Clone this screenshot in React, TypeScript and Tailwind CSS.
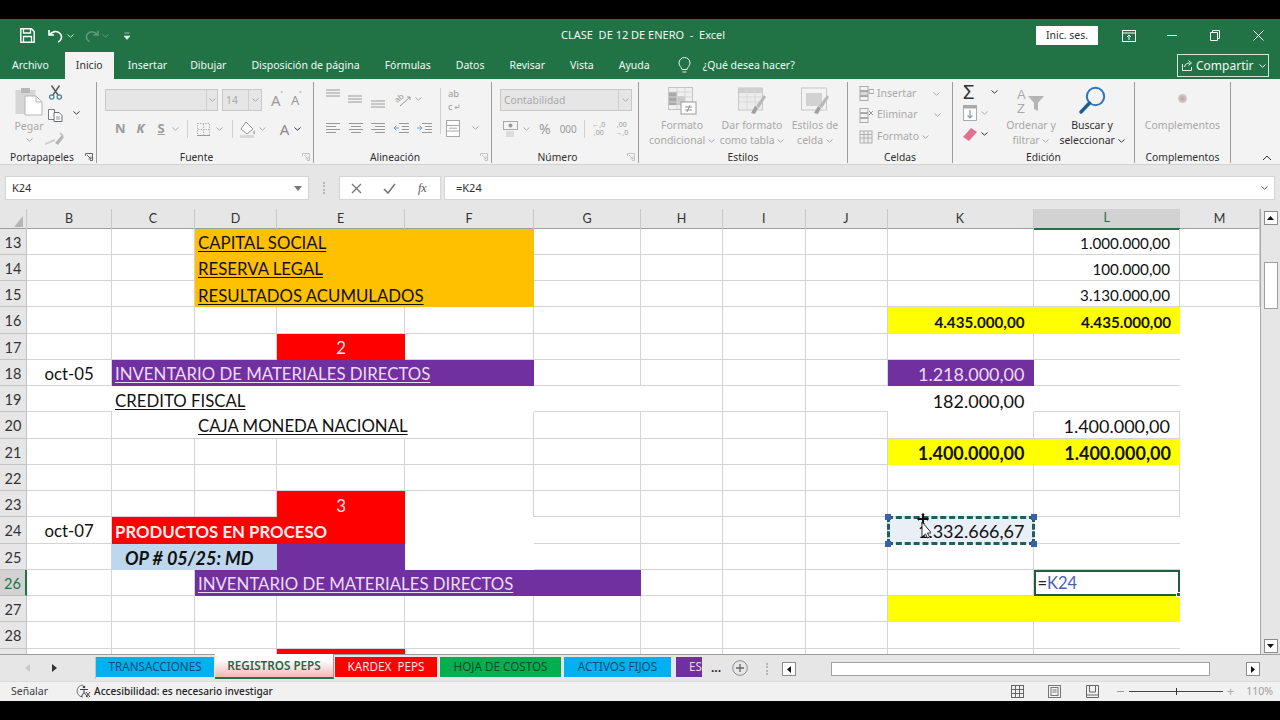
import React from "react";

const UI = "[font-family:'Noto_Sans',sans-serif]";
const SHEET = "[font-family:'Lato',sans-serif]";
const G = "#a8a8a8";

type S = { w?: number; h?: number; c?: string; className?: string };

const Chev = ({ c = G, className = "" }: S) => (
  <svg width="7" height="4" viewBox="0 0 7 4" className={`shrink-0 ${className}`}>
    <path d="M0.5 0.5 L3.5 3.2 L6.5 0.5" fill="none" stroke={c} strokeWidth="1" />
  </svg>
);

const Launcher = ({ c = "#b0b0b0" }: S) => (
  <svg width="8" height="8" viewBox="0 0 8 8">
    <path d="M0.5 3V0.5H7.5V7.5H5M2 2L6 6M6 3.5V6H3.5" fill="none" stroke={c} strokeWidth="0.9" />
  </svg>
);

const Lines = ({ kind, w = 14 }: { kind: "l" | "c" | "r" | "h"; w?: number }) => {
  const rows = kind === "h" ? [2, 5, 8] : [1.5, 4.5, 7.5, 10.5];
  return (
    <svg width={w} height="12" viewBox="0 0 14 12" className="shrink-0">
      {rows.map((y, i) => {
        const short = i % 2 === 1;
        const x1 = kind === "r" && short ? 4 : kind === "c" && short ? 2 : 0;
        const x2 = kind === "l" && short ? 10 : kind === "c" && short ? 12 : 14;
        return <line key={y} x1={x1} x2={x2} y1={y} y2={y} stroke="#9a9a9a" strokeWidth="1" />;
      })}
    </svg>
  );
};

const Group = ({ w, label, launcher, children, labelCls = "text-center" }: { w: number; label: string; launcher?: string; children: React.ReactNode; labelCls?: string }) => (
  <div style={{ width: w }} className="flex flex-col h-[81px] mt-[3px] border-r border-[#9c9c9c] shrink-0">
    <div className="h-[69px] flex">{children}</div>
    <div className={`relative h-[12px] text-[10.3px] leading-[12px] text-[#303030] whitespace-nowrap ${labelCls}`}>
      {label}
      {launcher && (
        <span className="absolute right-[3px] top-[2px] flex">
          <Launcher c={launcher} />
        </span>
      )}
    </div>
  </div>
);

const GreyBox = ({ w, text, arrow }: { w: number; text?: string; arrow: number }) => (
  <div style={{ width: w }} className="h-[22px] flex bg-[#e6e6e6] border border-[#c8c8c8]">
    <div className="flex-1 text-[10.3px] leading-[20px] pl-[3px] text-[#a9a9a9]">{text}</div>
    <div style={{ width: arrow }} className="border-l border-[#cfcfcf] flex items-center justify-center">
      <Chev />
    </div>
  </div>
);

const Clipboard = () => (
  <svg width="28" height="29" viewBox="0 0 28 29" className="shrink-0">
    <rect x="0.5" y="3" width="20" height="24" fill="#d6d6d6" />
    <rect x="6" y="1" width="9" height="5" fill="#b8b8b8" />
    <path d="M10 9h11l6 6v13H10z" fill="#fff" stroke="#b5b5b5" />
    <path d="M21 9v6h6" fill="none" stroke="#b5b5b5" />
  </svg>
);

const Scissors = () => (
  <svg width="15" height="15" viewBox="0 0 15 15" className="shrink-0">
    <path d="M3.5 0.5 L10 10 M11.5 0.5 L5 10" stroke="#555" strokeWidth="1.4" fill="none" />
    <circle cx="3.7" cy="12" r="2.2" fill="none" stroke="#3f7fa5" strokeWidth="1.2" />
    <circle cx="11.3" cy="12" r="2.2" fill="none" stroke="#3f7fa5" strokeWidth="1.2" />
  </svg>
);

const CopyI = () => (
  <svg width="15" height="13" viewBox="0 0 15 13" className="shrink-0">
    <path d="M0.5 0.5h6v10h-6z" fill="#fff" stroke="#7a7a7a" />
    <path d="M6 3.5h5l3 3v6H6z" fill="#fff" stroke="#6a6a6a" />
    <path d="M8 8h4M8 10h4" stroke="#7a9ab5" />
  </svg>
);

const Brush = () => (
  <svg width="20" height="15" viewBox="0 0 20 15" className="shrink-0">
    <path d="M0 13 L10 9" stroke="#d0d0d0" strokeWidth="2" />
    <path d="M10 12 L17 4 L19 6 L13 14z" fill="#b5b5b5" />
    <path d="M15 2l3 3" stroke="#c5c5c5" strokeWidth="2" />
  </svg>
);

const FormatCond = () => (
  <svg width="29" height="28" viewBox="0 0 29 28" className="shrink-0">
    <rect x="0.5" y="0.5" width="24" height="22" fill="#f0f0f0" stroke="#c4c4c4" />
    <rect x="1" y="5" width="8" height="13" fill="#a8a8a8" />
    <rect x="9" y="9" width="8" height="9" fill="#c8c8c8" />
    <path d="M9 1v21M17 1v21M1 5h24M1 10h24M1 15h24" stroke="#d5d5d5" />
    <rect x="13" y="15" width="15" height="12" fill="#fff" stroke="#9a9a9a" />
    <path d="M17 20h7M17 23h7M22 18l-3 7" fill="none" stroke="#777" strokeWidth="0.8" />
  </svg>
);

const FormatTable = () => (
  <svg width="29" height="28" viewBox="0 0 29 28" className="shrink-0">
    <rect x="0.5" y="1" width="24" height="22" fill="#ececec" stroke="#c8c8c8" />
    <rect x="1" y="1" width="24" height="5" fill="#cfcfcf" />
    <path d="M9 1v22M17 1v22M1 10h24M1 15h24" stroke="#d8d8d8" />
    <path d="M13 26 L17 19 L20 21 L17 27z" fill="#a0a0a0" />
    <path d="M18 19 L26 8 L28 10 L21 21z" fill="#b8b8b8" />
  </svg>
);

const FormatCell = () => (
  <svg width="29" height="28" viewBox="0 0 29 28" className="shrink-0">
    <rect x="0.5" y="1" width="25" height="22" fill="#f3f3f3" stroke="#c8c8c8" />
    <rect x="5" y="6" width="16" height="13" fill="#d2d2d2" />
    <path d="M13 26 L17 19 L20 21 L17 27z" fill="#a0a0a0" />
    <path d="M18 19 L26 8 L28 10 L21 21z" fill="#b8b8b8" />
  </svg>
);

const CellIcon = ({ mark }: { mark: "i" | "x" | "f" }) => (
  <svg width="15" height="15" viewBox="0 0 15 15" className="shrink-0">
    {mark === "f" ? (
      <>
        <rect x="1" y="2" width="12" height="12" fill="#eee" stroke="#b0b0b0" />
        <path d="M1 5.5h12M1 9h12M5 2v12M9 2v12" stroke="#b0b0b0" />
      </>
    ) : (
      <>
        <rect x="1" y="0.5" width="8" height="4" fill="none" stroke="#aaa" />
        <rect x="1" y="5.5" width="8" height="4" fill={mark === "i" ? "#d8d8d8" : "none"} stroke="#aaa" />
        <rect x="1" y="10.5" width="8" height="4" fill="none" stroke="#aaa" />
        {mark === "i" ? <path d="M10 3.5h5v4h-5z" fill="none" stroke="#aaa" /> : <path d="M10 3l4 4M14 3l-4 4" stroke="#999" />}
      </>
    )}
  </svg>
);

const SortI = () => (
  <svg width="28" height="30" viewBox="0 0 28 30" className="shrink-0">
    <text x="0" y="12" fontSize="13" fill="#a9a9a9" fontFamily="Liberation Sans">A</text>
    <text x="0" y="26" fontSize="13" fill="#a9a9a9" fontFamily="Liberation Sans">Z</text>
    <path d="M11 9h16l-6 7v8l-4-2v-6z" fill="#b4b4b4" />
  </svg>
);

const SearchI = () => (
  <svg width="27" height="28" viewBox="0 0 27 28" className="shrink-0">
    <circle cx="16.5" cy="10.5" r="8.7" fill="none" stroke="#2e75b6" strokeWidth="2" />
    <path d="M10.5 17 L2 26" stroke="#1f5f99" strokeWidth="3.4" strokeLinecap="round" />
  </svg>
);

const Ribbon = () => (
  <div className={`flex h-[86px] bg-[#f3f3f3] border-b border-[#d2d2d2] ${UI}`}>
    <Group w={97} label="Portapapeles" launcher="#555" labelCls="text-left pl-[10px]">
      <div className="w-[28px] ml-[15px] flex flex-col items-center pt-[5px]">
        <Clipboard />
        <div className="text-[10.5px] leading-[14px] mt-[3px] text-[#a8a8a8]">Pegar</div>
        <Chev className="mt-[5px]" />
      </div>
      <div className="w-[20px] ml-[2px] flex flex-col items-center pt-[3px]">
        <Scissors />
        <div className="mt-[9px]"><CopyI /></div>
        <div className="mt-[9px]"><Brush /></div>
      </div>
      <Chev c="#333" className="ml-[8px] mt-[29px]" />
    </Group>

    <Group w={217} label="Fuente" launcher="#c0c0c0" labelCls="text-center pr-[17px]">
      <div className="flex flex-col">
        <div className="flex items-center mt-[7px] ml-[8px]">
          <GreyBox w={113} arrow={11} />
          <div className="ml-[4px]"><GreyBox w={40} text="14" arrow={13} /></div>
          <span className="ml-[9px] text-[15px] leading-[22px] text-[#9a9a9a]">A</span>
          <span className="text-[8px] leading-[8px] text-[#777] mb-[10px]">˄</span>
          <span className="ml-[8px] text-[13px] leading-[22px] text-[#9a9a9a]">A</span>
          <span className="text-[8px] leading-[8px] text-[#777] mb-[10px]">˅</span>
        </div>
        <div className="flex items-center h-[20px] mt-[8px] ml-[18px] text-[#9a9a9a] text-[13px]">
          <span className="font-bold">N</span>
          <span className="ml-[11px] font-bold italic">K</span>
          <span className="ml-[13px] font-bold underline">S</span>
          <Chev className="ml-[7px]" />
          <div className="ml-[8px] w-px h-[18px] bg-[#d0d0d0]" />
          <svg width="13" height="13" viewBox="0 0 13 13" className="ml-[9px]">
            <rect x="0.5" y="0.5" width="12" height="12" fill="none" stroke="#b5b5b5" strokeDasharray="1.5 1" />
            <path d="M6.5 1v11M1 6.5h11" stroke="#b5b5b5" strokeDasharray="1.5 1" />
            <path d="M0 12.5h13" stroke="#9a9a9a" />
          </svg>
          <Chev className="ml-[6px]" />
          <div className="ml-[9px] w-px h-[18px] bg-[#d0d0d0]" />
          <svg width="16" height="17" viewBox="0 0 16 17" className="ml-[7px]">
            <path d="M6 1 L13 8 L7 13 L1 8z" fill="#fff" stroke="#999" />
            <path d="M14 9c1 2 1.500 3 0.500 4s-2-1-0.500-4z" fill="#aaa" />
            <rect x="0" y="14" width="14" height="3" fill="#d8d8d8" />
          </svg>
          <Chev className="ml-[3px]" />
          <span className="ml-[14px] text-[15px] text-[#8c8c8c]">A</span>
          <Chev c="#333" className="ml-[5px]" />
        </div>
      </div>
    </Group>

    <Group w={178} label="Alineación" launcher="#c0c0c0" labelCls="text-center pr-[15px]">
      <div className="flex flex-col">
        <div className="flex h-[28px] mt-[6px] ml-[12px]">
          <div><Lines kind="h" /></div>
          <div className="ml-[8px] mt-[6px]"><Lines kind="h" /></div>
          <div className="ml-[9px] mt-[11px]"><Lines kind="h" /></div>
          <svg width="17" height="16" viewBox="0 0 17 16" className="ml-[9px] mt-[3px] overflow-visible">
            <text x="1" y="10" fontSize="8" fill="#999" transform="rotate(-40 5 8)" fontFamily="Liberation Sans">ab</text>
            <path d="M6 15 L16 6" stroke="#999" />
            <path d="M16 6l-3 0M16 6l0 3" stroke="#999" />
          </svg>
          <Chev className="ml-[4px] mt-[9px]" />
          <div className="ml-[18px] w-px h-[46px] bg-[#d0d0d0]" />
          <div className="ml-[7px] -mt-[1px] text-[#9a9a9a] text-[9.5px] leading-[13px]">
            ab
            <div className="flex items-center">
              c
              <svg width="6" height="6" viewBox="0 0 6 6" className="ml-[1px]"><path d="M5 0.500V3.500H1M2.500 2L1 3.500 2.500 5" fill="none" stroke="#9a9a9a" strokeWidth="0.800" /></svg>
            </div>
          </div>
        </div>
        <div className="flex items-center h-[20px] mt-[2px] ml-[12px]">
          <Lines kind="l" />
          <div className="ml-[9px]"><Lines kind="c" /></div>
          <div className="ml-[8px]"><Lines kind="r" /></div>
          <svg width="15" height="12" viewBox="0 0 15 12" className="ml-[9px]">
            <path d="M5 1.500h10M8 4.500h7M8 7.500h7M5 10.500h10" stroke="#9a9a9a" />
            <path d="M0 6h5M2.500 3.500L0 6l2.500 2.500" fill="none" stroke="#7d9cba" />
          </svg>
          <svg width="15" height="12" viewBox="0 0 15 12" className="ml-[8px]">
            <path d="M5 1.500h10M8 4.500h7M8 7.500h7M5 10.500h10" stroke="#9a9a9a" />
            <path d="M0 6h5M2.500 3.500L5 6l-2.500 2.500" fill="none" stroke="#7d9cba" />
          </svg>
          <svg width="14" height="17" viewBox="0 0 14 17" className="ml-[14px]">
            <rect x="0.5" y="0.5" width="13" height="16" fill="#fff" stroke="#a8a8a8" />
            <path d="M0.500 5.500h13M0.500 11h13M3 8.200h8" stroke="#a8a8a8" />
          </svg>
          <Chev className="ml-[12px]" />
        </div>
      </div>
    </Group>

    <Group w={147} label="Número" launcher="#c0c0c0" labelCls="text-center pr-[15px]">
      <div className="flex flex-col">
        <div className="mt-[7px] ml-[8px]"><GreyBox w={132} text="Contabilidad" arrow={13} /></div>
        <div className="flex items-center h-[20px] mt-[8px] ml-[11px] text-[#9a9a9a]">
          <svg width="15" height="17" viewBox="0 0 15 17">
            <rect x="0.5" y="0.5" width="14" height="8" fill="#f4f4f4" stroke="#a8a8a8" />
            <circle cx="7.500" cy="4.500" r="2" fill="#9a9a9a" />
            <path d="M3 10h8v6H3z" fill="#dcdcdc" />
          </svg>
          <Chev className="ml-[5px]" />
          <span className="ml-[9px] text-[14px] leading-[20px]">%</span>
          <span className="ml-[9px] text-[10px] leading-[20px]">000</span>
          <div className="ml-[7px] w-px h-[18px] bg-[#d0d0d0]" />
          <div className="ml-[7px] text-[7px] leading-[8px] w-[14px] text-center whitespace-nowrap">←,0<br />,00</div>
          <div className="ml-[9px] text-[7px] leading-[8px] w-[14px] text-center whitespace-nowrap">,00<br />→,0</div>
        </div>
      </div>
    </Group>

    <Group w={209} label="Estilos">
      <div className="flex text-[10.5px] leading-[15px] text-[#a8a8a8] whitespace-nowrap">
        <div className="w-[78px] ml-[4px] flex flex-col items-center pt-[5px]">
          <FormatCond />
          <div className="mt-[3px] text-center">Formato<br />condicional <Chev className="inline" /></div>
        </div>
        <div className="w-[62px] flex flex-col items-center pt-[5px]">
          <FormatTable />
          <div className="mt-[3px] text-center">Dar formato<br />como tabla <Chev className="inline" /></div>
        </div>
        <div className="w-[64px] flex flex-col items-center pt-[5px]">
          <FormatCell />
          <div className="mt-[3px] text-center">Estilos de<br />celda <Chev className="inline" /></div>
        </div>
      </div>
    </Group>

    <Group w={105} label="Celdas">
      <div className="flex flex-col ml-[11px] mt-[4px] text-[10.5px] text-[#a8a8a8] gap-[6.5px]">
        <div className="flex items-center h-[15px]"><CellIcon mark="i" /><span className="ml-[3px]">Insertar</span><Chev className="ml-[17px]" /></div>
        <div className="flex items-center h-[15px]"><CellIcon mark="x" /><span className="ml-[3px]">Eliminar</span><Chev className="ml-[16px]" /></div>
        <div className="flex items-center h-[15px]"><CellIcon mark="f" /><span className="ml-[3px]">Formato</span><Chev className="ml-[3px]" /></div>
      </div>
    </Group>

    <Group w={182} label="Edición">
      <div className="flex">
        <div className="flex flex-col ml-[10px] w-[36px] mt-[2px] gap-[5px]">
          <div className="flex items-center h-[16px]">
            <span className="text-[20px] leading-[16px] text-[#333] w-[16px]">Σ</span>
            <Chev c="#333" className="ml-[12px]" />
          </div>
          <div className="flex items-center h-[16px]">
            <svg width="14" height="16" viewBox="0 0 14 16">
              <rect x="0.5" y="0.5" width="13" height="15" fill="#fff" stroke="#aaa" />
              <rect x="0.5" y="0.5" width="13" height="3" fill="#aaa" />
              <path d="M7 5v8M4.500 10.500L7 13l2.500-2.500" fill="none" stroke="#7d9cba" strokeWidth="1.200" />
            </svg>
            <Chev className="ml-[4px]" />
          </div>
          <div className="flex items-center h-[16px]">
            <svg width="14" height="13" viewBox="0 0 14 13">
              <path d="M0 9 L8 0 L14 4 L6 13z" fill="#e0718f" />
            </svg>
            <Chev c="#333" className="ml-[4px]" />
          </div>
        </div>
        <div className="w-[60px] ml-[2px] flex flex-col items-center pt-[5px] text-[10.5px] leading-[15px] text-[#a8a8a8] whitespace-nowrap">
          <SortI />
          <div className="mt-[1px] text-center">Ordenar y<br />filtrar <Chev className="inline" /></div>
        </div>
        <div className="w-[62px] flex flex-col items-center pt-[4px] text-[10.5px] leading-[15px] text-[#303030] whitespace-nowrap">
          <SearchI />
          <div className="mt-[4px] text-center">Buscar y<br />seleccionar <Chev c="#333" className="inline" /></div>
        </div>
      </div>
    </Group>

    <Group w={96} label="Complementos">
      <div className="w-full flex flex-col items-center pt-[12px] text-[10.5px] leading-[15px] text-[#a8a8a8]">
        <div className="w-[9px] h-[9px] rounded-full bg-[radial-gradient(circle,#b9a4a4,#e0dcdc)]" />
        <div className="mt-[15px]">Complementos</div>
      </div>
    </Group>

    <div className="flex-1 flex justify-end items-end pb-[3px] pr-[8px]">
      <svg width="10" height="6" viewBox="0 0 10 6"><path d="M1 5L5 1l4 4" fill="none" stroke="#333" /></svg>
    </div>
  </div>
);

const TitleBar = () => (
  <div className={`h-[33px] bg-[#217346] flex items-center text-white ${UI}`}>
    <svg width="15" height="15" viewBox="0 0 15 15" className="ml-[20px]">
      <path d="M0.800 0.800H11.500L14.200 3.500V14.200H0.800z" fill="none" stroke="#fff" strokeWidth="1.400" />
      <path d="M3.500 1v4h7V1M3.500 14V8.500h8V14" fill="none" stroke="#fff" strokeWidth="1.300" />
    </svg>
    <svg width="15" height="14" viewBox="0 0 15 14" className="ml-[13px]">
      <path d="M1 1v5h5M1.500 6C4 2 9 1.500 12 4.500s1 7.500-2 8.500" fill="none" stroke="#fff" strokeWidth="1.600" />
    </svg>
    <Chev c="#d5e6dc" className="ml-[4px]" />
    <svg width="14" height="14" viewBox="0 0 15 14" className="ml-[11px]">
      <path d="M14 1v5H9M13.500 6C11 2 6 1.500 3 4.500S2 12 5 13" fill="none" stroke="#5f9a7c" strokeWidth="1.600" />
    </svg>
    <Chev c="#5f9a7c" className="ml-[3px]" />
    <svg width="6" height="8" viewBox="0 0 6 8" className="ml-[15px]">
      <path d="M0.500 1h5M0 4h6l-3 3.500z" fill="#e6f0ea" stroke="#e6f0ea" strokeWidth="0.600" />
    </svg>
    <div className="ml-[431px] w-[165px] text-[11px] whitespace-pre text-[#f0f6f2]">CLASE  DE 12 DE ENERO  -  Excel</div>
    <div className="ml-[310px] w-[62px] h-[19px] bg-white text-[#303030] text-[10.5px] leading-[19px] text-center">Inic. ses.</div>
    <svg width="14" height="12" viewBox="0 0 14 12" className="ml-[24px]">
      <rect x="0.500" y="0.500" width="13" height="11" fill="none" stroke="#fff" />
      <path d="M1 3h12M7 10V5M5 7l2-2 2 2" fill="none" stroke="#fff" />
    </svg>
    <div className="ml-[31px] w-[10px] h-px bg-[#dcebe2]" />
    <svg width="10" height="11" viewBox="0 0 10 11" className="ml-[33px]">
      <path d="M2.500 2.500V0.500h7v8h-2M0.500 2.500h7v8h-7z" fill="none" stroke="#fff" />
    </svg>
    <svg width="11" height="11" viewBox="0 0 11 11" className="ml-[33px]">
      <path d="M0.500 0.500L10.500 10.500M10.500 0.500L0.500 10.500" stroke="#fff" />
    </svg>
  </div>
);

const MenuBar = () => {
  const items = ["Disposición de página", "Fórmulas", "Datos", "Revisar", "Vista", "Ayuda"];
  return (
    <div className={`h-[27px] bg-[#217346] flex text-[#f2f7f4] text-[10.5px] leading-[27px] whitespace-nowrap ${UI}`}>
      <div className="ml-[12px]">Archivo</div>
      <div className="ml-[16px] w-[49px] bg-[#f3f3f3] text-[#303030] text-center">Inicio</div>
      <div className="ml-[14px]">Insertar</div>
      <div className="ml-[23px]">Dibujar</div>
      {items.map((t) => (
        <div key={t} className="ml-[25px]">{t}</div>
      ))}
      <svg width="13" height="17" viewBox="0 0 13 17" className="ml-[28px] mt-[5px]">
        <path d="M4 12.500C3.500 10 1 9 1 6a5.500 5.500 0 0 1 11 0c0 3-2.500 4-3 6.500zM4.500 15h4" fill="none" stroke="#e8f1ec" />
      </svg>
      <div className="ml-[12px]">¿Qué desea hacer?</div>
      <div className="ml-auto mr-[11px] mt-[2px] w-[92px] h-[23px] border border-[#d5e6dc] flex items-center pl-[4px] text-[12px] text-[#f2f7f4]">
        <svg width="11" height="11" viewBox="0 0 11 11">
          <path d="M0.500 4v6.500h9V7M2.500 7C3 4 5 3 8 3M6.500 0.500L9.500 3l-3 2.500" fill="none" stroke="#e8f1ec" />
        </svg>
        <span className="ml-[3px]">Compartir</span>
        <Chev c="#e8f1ec" className="ml-[5px]" />
      </div>
    </div>
  );
};

const FormulaBar = () => (
  <div className={`h-[44px] bg-[#e6e6e6] flex pt-[11px] text-[11px] text-[#303030] ${UI}`}>
    <div className="ml-[5px] w-[304px] h-[24px] bg-white border border-[#d4d4d4] flex items-center justify-between pl-[6px] pr-[6px]">
      <span>K24</span>
      <svg width="8" height="5" viewBox="0 0 8 5"><path d="M0 0h8L4 5z" fill="#777" /></svg>
    </div>
    <div className="ml-[14px] w-[2px] h-[12px] mt-[6px] border-l-2 border-dotted border-[#b8b8b8]" />
    <div className="ml-[14px] w-[102px] h-[24px] bg-white border border-[#d4d4d4] flex items-center pl-[11px]">
      <svg width="11" height="11" viewBox="0 0 11 11"><path d="M1 1l9 9M10 1l-9 9" stroke="#777" strokeWidth="1.400" /></svg>
      <svg width="13" height="11" viewBox="0 0 13 11" className="ml-[21px]"><path d="M1 6l4 4 7-9" fill="none" stroke="#777" strokeWidth="1.600" /></svg>
      <span className="ml-[22px] italic text-[12px] [font-family:'Liberation_Serif',serif] text-[#555]">fx</span>
    </div>
    <div className="ml-[3px] w-[831px] h-[24px] bg-white border border-[#d4d4d4] flex items-center justify-between pl-[11px] pr-[6px]">
      <span>=K24</span>
      <Chev c="#555" />
    </div>
  </div>
);

const COLS = "grid grid-cols-[27px_85px_83px_82px_128px_129px_107px_82px_82.5px_82px_146px_146.5px_80px]";

const HeaderRow = () => {
  const cols = ["B", "C", "D", "E", "F", "G", "H", "I", "J", "K", "L", "M"];
  return (
    <div className={`${COLS} h-[19.5px] shrink-0 bg-[#e6e6e6] border-b border-[#9e9e9e] text-[12.5px] text-[#333] ${SHEET}`}>
      <div className="flex justify-end items-end pr-[3px] pb-[2px] border-r border-[#c8c8c8]">
        <svg width="9" height="11" viewBox="0 0 9 11"><path d="M9 0v11H0z" fill="#b5b5b5" /></svg>
      </div>
      {cols.map((c) => (
        <div
          key={c}
          className={
            c === "L"
              ? "flex items-center justify-center bg-[#d2d2d2] border-b-2 border-[#217346] text-[#217346] -mb-px"
              : "flex items-center justify-center border-r border-[#c8c8c8]"
          }
        >
          {c}
        </div>
      ))}
    </div>
  );
};

const RB = "border-r border-b border-[#d4d4d4]";
const Bo = "border-b border-[#d4d4d4]";
const Ri = "border-r border-[#d4d4d4]";
const NO = "";
const ORANGE = "bg-[#ffc000]";
const YEL = "bg-[#ffff00] justify-end pr-[9px] font-bold text-[15.2px]";
const YEL2 = "bg-[#ffff00] justify-end pr-[9px] font-bold text-[18px]";
const NUM = "justify-end pr-[9px] text-[15.2px]";
const NUMB = "justify-end pr-[9px] text-[18px]";
const PUR = "bg-[#7030a0] text-[#eadcf4]";
const RED = "bg-[#ff0000] text-[#ffe4e4] justify-center";

type Cell = { c?: string; t?: React.ReactNode; s?: string; raw?: boolean };
const n = (count: number, c = RB): Cell[] => Array.from({ length: count }, () => ({ c }));

const U = ({ children }: { children: React.ReactNode }) => <span className="underline underline-offset-[2px] decoration-1">{children}</span>;

const Selected = () => (
  <div className="relative w-full h-full bg-[#e9eff7] flex items-center justify-end pr-[9px] pt-[1px] text-[18px]">
    1.332.666,67
    <div className="absolute -inset-x-px -top-px -bottom-px border-[3px] border-dashed border-[#1f5f5c]" />
    <div className="absolute -left-[3px] -top-[3px] w-[6px] h-[6px] bg-[#3b5fb0]" />
    <div className="absolute -right-[3px] -top-[3px] w-[6px] h-[6px] bg-[#3b5fb0]" />
    <div className="absolute -left-[3px] -bottom-[3px] w-[6px] h-[6px] bg-[#3b5fb0]" />
    <div className="absolute -right-[3px] -bottom-[3px] w-[6px] h-[6px] bg-[#3b5fb0]" />
    <svg width="16" height="26" viewBox="0 0 16 26" className="absolute left-[27px] top-[-4px]">
      <path d="M8 0l2 2H9v3h3V4l2 2-2 2V7H9v3h1l-2 2-2-2h1V7H4v1L2 6l2-2v1h3V2H6z" fill="#111" />
      <path d="M7 9l0 15 3.500-3 2 4 2-1-2-4 4 0z" fill="#fff" stroke="#111" strokeWidth="0.900" />
    </svg>
  </div>
);

const Active = () => (
  <div className="relative w-full h-full border-2 border-[#1f5f3f] flex items-center pl-[2px] text-[16.5px]">
    <span className="text-[#222]">=</span><span className="text-[#4a62ad]">K24</span>
    <div className="absolute -right-[3px] -bottom-[3px] w-[5px] h-[5px] bg-[#1f5f3f] border border-white" />
  </div>
);

const rows: { no: number; cells: Cell[]; act?: boolean; noLabel?: boolean }[] = [
  { no: 13, cells: [...n(2), { s: "col-span-3", c: ORANGE, t: <span className="ml-[3px]"><U>CAPITAL SOCIAL</U></span> }, ...n(5), { c: `${RB} ${NUM}`, t: "1.000.000,00" }, { c: RB }] },
  { no: 14, cells: [...n(2), { s: "col-span-3", c: ORANGE, t: <span className="ml-[3px]"><U>RESERVA LEGAL</U></span> }, ...n(5), { c: `${RB} ${NUM}`, t: "100.000,00" }, { c: RB }] },
  { no: 15, cells: [...n(2), { s: "col-span-3", c: ORANGE, t: <span className="ml-[3px]"><U>RESULTADOS ACUMULADOS</U></span> }, ...n(5), { c: `${RB} ${NUM}`, t: "3.130.000,00" }, { c: RB }] },
  { no: 16, cells: [...n(9), { c: YEL, t: "4.435.000,00" }, { c: YEL, t: "4.435.000,00" }, {}] },
  { no: 17, cells: [...n(3), { c: RED, t: "2" }, ...n(6), { c: Bo }, {}] },
  { no: 18, cells: [{ c: `${RB} justify-center`, t: "oct-05" }, { s: "col-span-4", c: PUR, t: <span className="ml-[3px]"><U>INVENTARIO DE MATERIALES DIRECTOS</U></span> }, ...n(4), { c: `${PUR} ${NUMB}`, t: "1.218.000,00" }, { c: Bo }, {}] },
  { no: 19, cells: [{ c: Bo }, { s: "col-span-4", t: <span className="ml-[3px]"><U>CREDITO FISCAL</U></span> }, { c: Bo }, { c: RB }, { c: RB }, { c: Bo }, { c: NUMB, t: "182.000,00" }, { c: Bo }, {}] },
  { no: 20, cells: [{ c: RB }, { s: "col-span-4", c: RB, t: <span className="ml-[86px]"><U>CAJA MONEDA NACIONAL</U></span> }, ...n(5), { c: `${RB} ${NUMB}`, t: "1.400.000,00" }, {}] },
  { no: 21, cells: [...n(9), { c: YEL2, t: "1.400.000,00" }, { c: YEL2, t: "1.400.000,00" }, {}] },
  { no: 22, cells: [...n(11), {}] },
  { no: 23, cells: [...n(3), { c: RED, t: "3" }, { c: Ri }, ...n(6), {}] },
  { no: 24, cells: [{ c: `${RB} justify-center`, t: "oct-07" }, { s: "col-span-3", c: "bg-[#ff0000] text-[#fff1f1] font-bold", t: <span className="ml-[3px]">PRODUCTOS EN PROCESO</span> }, { c: NO }, ...n(4), { c: "z-10", t: <Selected />, raw: true }, { c: Bo }, {}] },
  { no: 25, cells: [{ c: RB }, { s: "col-span-2", c: "bg-[#bdd7ee] font-bold italic text-[#111] text-[18px]", t: <span className="ml-[13px]">OP # 05/25: MD</span> }, { c: "bg-[#7030a0]" }, { c: NO }, ...n(4), { c: RB }, { c: Bo }, {}] },
  { no: 26, act: true, cells: [...n(2), { s: "col-span-4", c: PUR, t: <span className="ml-[3px]"><U>INVENTARIO DE MATERIALES DIRECTOS</U></span> }, ...n(4), { c: "z-10", t: <Active />, raw: true }, {}] },
  { no: 27, cells: [...n(9), { c: "bg-[#ffff00]" }, { c: "bg-[#ffff00]" }, {}] },
  { no: 28, cells: [...n(10), { c: Bo }, {}] },
  { no: 29, noLabel: true, cells: [...n(3, RB), { c: "bg-[#ff0000]" }, ...n(6, RB), { c: Bo }, {}] },
];

const Sheet = () => (
  <div className={`flex h-[445px] ${SHEET}`}>
    <div className="w-[1260px] flex flex-col bg-white overflow-hidden">
      <HeaderRow />
      {rows.map((r) => (
        <div key={r.no} className={`${COLS} grid-rows-[26.25px] h-[26.25px] shrink-0 text-[16.8px] leading-[20px] text-[#111]`}>
          <div className={r.act ? "flex items-center justify-center pt-[3px] bg-[#d2d2d2] border-r-2 border-[#217346] border-b border-b-[#bcbcbc] text-[#217346] text-[14.5px]" : "flex items-center justify-center pt-[3px] bg-[#e6e6e6] border-r border-b border-[#c4c4c4] text-[14.5px] text-[#333]"}>
            {r.noLabel ? null : r.no}
          </div>
          {r.cells.map((c, i) => (
            <div key={i} className={`${c.s ?? ""} ${c.c ?? ""} ${c.raw ? "" : "pt-[3px]"} flex items-center whitespace-nowrap min-w-0`}>
              {c.t}
            </div>
          ))}
        </div>
      ))}
    </div>
    <div className="w-[20px] bg-[#e6e6e6] border-l border-[#a8a8a8] flex flex-col items-center pt-[2px]">
      <div className="w-[14px] h-[14px] bg-white border border-[#8c8c8c] flex items-center justify-center">
        <svg width="7" height="4" viewBox="0 0 7 4"><path d="M0 4h7L3.500 0z" fill="#111" /></svg>
      </div>
      <div className="w-[14px] h-[47px] mt-[37px] bg-white border border-[#a0a0a0]" />
      <div className="flex-1" />
      <div className="w-[14px] h-[14px] mb-[1px] bg-white border border-[#8c8c8c] flex items-center justify-center">
        <svg width="7" height="4" viewBox="0 0 7 4"><path d="M0 0h7L3.500 4z" fill="#111" /></svg>
      </div>
    </div>
  </div>
);

const Tab = ({ w, c, children }: { w: number; c: string; children: React.ReactNode }) => (
  <div style={{ width: w }} className={`h-[20px] mt-[2px] flex items-center justify-center text-[11.7px] whitespace-pre shrink-0 overflow-hidden ${c}`}>{children}</div>
);

const Tabs = () => (
  <div className={`h-[27px] bg-[#e6e6e6] border-t border-[#9c9c9c] flex ${UI}`}>
    <svg width="5" height="8" viewBox="0 0 5 8" className="ml-[25px] mt-[9px]"><path d="M5 0v8L0 4z" fill="#c8c8c8" /></svg>
    <svg width="5" height="8" viewBox="0 0 5 8" className="ml-[22px] mt-[9px]"><path d="M0 0v8l5-4z" fill="#333" /></svg>
    <div className="ml-[38px] w-px h-[22px] mt-[2px] bg-[#c4c4c4]" />
    <Tab w={118} c="bg-[#00b0f0] text-[#0f4c72]">TRANSACCIONES</Tab>
    <div className="ml-[1px] w-[119px] h-[25px] bg-[linear-gradient(#ffffff_25%,#f4b8b8)] border-r border-b-2 border-b-[#217346] border-r-[#9c9c9c] flex items-center justify-center text-[11.7px] font-semibold text-[#1f6b46] shrink-0 -mt-px">REGISTROS PEPS</div>
    <div className="ml-[1px]" />
    <Tab w={102} c="bg-[#ff0000] text-[#ffe8e8]">KARDEX  PEPS</Tab>
    <div className="ml-[3px]" />
    <Tab w={121} c="bg-[#00b050] text-[#0c4a2a]">HOJA DE COSTOS</Tab>
    <div className="ml-[3px]" />
    <Tab w={107} c="bg-[#00b0f0] text-[#0f4c72]">ACTIVOS FIJOS</Tab>
    <div className="ml-[5px]" />
    <Tab w={26} c="bg-[#7030a0] text-[#e6d5f2] justify-end">ES</Tab>
    <div className="ml-[9px] text-[12px] font-bold leading-[26px] text-[#333]">...</div>
    <svg width="16" height="16" viewBox="0 0 16 16" className="ml-[11px] mt-[5px]">
      <circle cx="8" cy="8" r="7.300" fill="none" stroke="#8c8c8c" />
      <path d="M8 4v8M4 8h8" stroke="#666" strokeWidth="1.300" />
    </svg>
    <div className="ml-[18px] mt-[8px] h-[12px] w-[2px] border-l-2 border-dotted border-[#b4b4b4]" />
    <div className="ml-[14px] mt-[7px] w-[14px] h-[14px] bg-white border border-[#8c8c8c] flex items-center justify-center">
      <svg width="4" height="7" viewBox="0 0 4 7"><path d="M4 0v7L0 3.500z" fill="#111" /></svg>
    </div>
    <div className="ml-[35px] mt-[7px] w-[379px] h-[14px] bg-white border border-[#a0a0a0]" />
    <div className="ml-[36px] mt-[7px] w-[14px] h-[14px] bg-white border border-[#8c8c8c] flex items-center justify-center">
      <svg width="4" height="7" viewBox="0 0 4 7"><path d="M0 0v7l4-3.500z" fill="#111" /></svg>
    </div>
  </div>
);

const StatusBar = () => (
  <div className={`h-[20px] bg-[#f1f1f1] border-t border-[#dcdcdc] flex items-center text-[10.5px] text-[#404040] whitespace-nowrap ${UI}`}>
    <span className="ml-[11px]">Señalar</span>
    <svg width="15" height="15" viewBox="0 0 15 15" className="ml-[28px]">
      <path d="M7 1a6 6 0 1 0 0 12" fill="none" stroke="#777" />
      <circle cx="8" cy="3" r="1.300" fill="#444" />
      <path d="M4 5.500h8M8 5.500v3M8 8.500L5 13M8 8.500l4 5M10 8l4 5M14 8l-4 5" fill="none" stroke="#444" />
    </svg>
    <span className="ml-[3px] text-[10.1px] text-[#222] font-medium">Accesibilidad: es necesario investigar</span>
    <svg width="13" height="13" viewBox="0 0 13 13" className="ml-auto">
      <rect x="0.500" y="0.500" width="12" height="12" fill="none" stroke="#666" />
      <path d="M4.500 1v11M8.500 1v11M1 4.500h11M1 8.500h11" stroke="#666" />
    </svg>
    <svg width="13" height="13" viewBox="0 0 13 13" className="ml-[24px]">
      <rect x="0.500" y="0.500" width="12" height="12" fill="none" stroke="#777" />
      <rect x="3" y="2.500" width="7" height="8" fill="none" stroke="#777" />
      <path d="M4.500 5h4M4.500 7h4" stroke="#777" />
    </svg>
    <svg width="13" height="13" viewBox="0 0 13 13" className="ml-[25px]">
      <path d="M0.500 0.500h12v12h-12zM3.500 1v6h6V1M1 10h11" fill="none" stroke="#666" />
    </svg>
    <div className="ml-[18px] w-[7px] h-px bg-[#999]" />
    <div className="relative ml-[5px] w-[94px] h-px bg-[#444]">
      <div className="absolute left-[47px] -top-[3px] w-px h-[7px] bg-[#333]" />
    </div>
    <span className="ml-[4px] text-[13px] text-[#aaa] leading-[13px]">+</span>
    <span className="ml-[12px] mr-[7px] text-[10.5px] text-[#a0a0a0]">110%</span>
  </div>
);

export default function App() {
  return (
    <div className="w-[1280px] h-[720px] bg-black overflow-hidden flex flex-col">
      <div className="h-[19px] shrink-0" />
      <TitleBar />
      <MenuBar />
      <Ribbon />
      <FormulaBar />
      <Sheet />
      <Tabs />
      <StatusBar />
    </div>
  );
}
